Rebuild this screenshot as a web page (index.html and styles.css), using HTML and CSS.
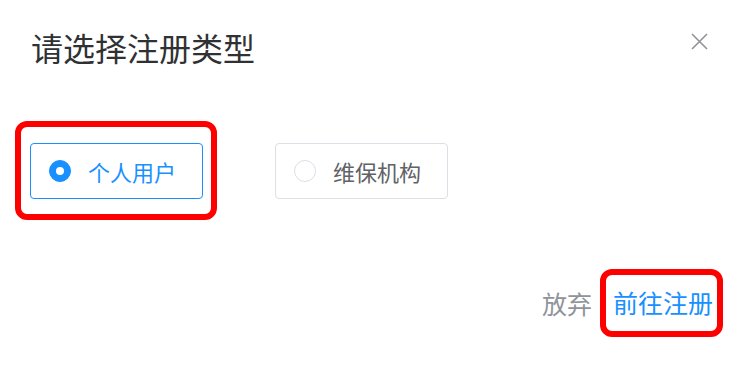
FILE: index.html
```html
<!DOCTYPE html>
<html lang="zh-CN">
<head>
<meta charset="utf-8">
<title>请选择注册类型</title>
<link rel="stylesheet" href="styles.css">
</head>
<body>
<div class="dialog">
  <div class="header">
    <div class="title">请选择注册类型</div>
    <button class="close" aria-label="关闭">
      <svg width="17" height="17" viewBox="0 0 17 17"><path d="M1 1L16 16M16 1L1 16" stroke="#909399" stroke-width="1.6" fill="none"/></svg>
    </button>
  </div>
  <div class="options">
    <div class="mark mark-option">
      <label class="option selected"><span class="radio"></span><span class="label">个人用户</span></label>
    </div>
    <label class="option"><span class="radio"></span><span class="label">维保机构</span></label>
  </div>
  <div class="footer">
    <button class="btn cancel">放弃</button>
    <div class="mark mark-btn">
      <button class="btn primary">前往注册</button>
    </div>
  </div>
</div>
</body>
</html>
```
FILE: styles.css
```css
html, body {
  margin: 0;
  background: #fff;
}
body {
  font-family: "Noto Sans CJK SC", "Noto Sans", sans-serif;
  width: 742px;
  height: 366px;
  overflow: hidden;
}
.header {
  display: flex;
  justify-content: space-between;
  align-items: flex-start;
  padding: 31px 34px 0 31px;
}
.title {
  font-size: 32px;
  line-height: 32px;
  color: #303133;
}
.close {
  border: 0;
  background: none;
  padding: 0;
  margin-top: 2px;
  width: 17px;
  height: 17px;
  display: block;
}
.close svg { display: block; }
.options {
  display: flex;
  align-items: center;
  gap: 58px;
  margin-top: 58px;
  padding-left: 15px;
}
.mark {
  border: 6px solid #ff0000;
  border-radius: 12px;
}
.mark-option {
  padding: 16px 8px 15px 9px;
}
.option {
  box-sizing: border-box;
  width: 173px;
  height: 56px;
  border: 1px solid #dcdfe6;
  border-radius: 4px;
  display: flex;
  align-items: center;
  padding-left: 18px;
  gap: 17px;
  font-size: 22px;
  color: #606266;
}
.option.selected {
  border-color: #1890ff;
  color: #1890ff;
}
.radio {
  box-sizing: border-box;
  width: 22px;
  height: 22px;
  border-radius: 50%;
  border: 1px solid #dcdfe6;
  background: #fff;
  display: flex;
  align-items: center;
  justify-content: center;
}
.selected .radio {
  border-color: #1890ff;
  background: #1890ff;
}
.selected .radio::after {
  content: "";
  width: 8px;
  height: 8px;
  border-radius: 50%;
  background: #fff;
}
.label { line-height: 1; }
.footer {
  display: flex;
  justify-content: flex-end;
  align-items: center;
  margin-top: 49px;
  padding-right: 19px;
  gap: 8px;
}
.btn {
  font-family: inherit;
  font-size: 25px;
  line-height: 25px;
  border: 0;
  background: none;
  padding: 0;
}
.cancel { color: #909399; }
.mark-btn {
  padding: 15px 4px 13px 7px;
}
.primary { color: #1890ff; }
```
